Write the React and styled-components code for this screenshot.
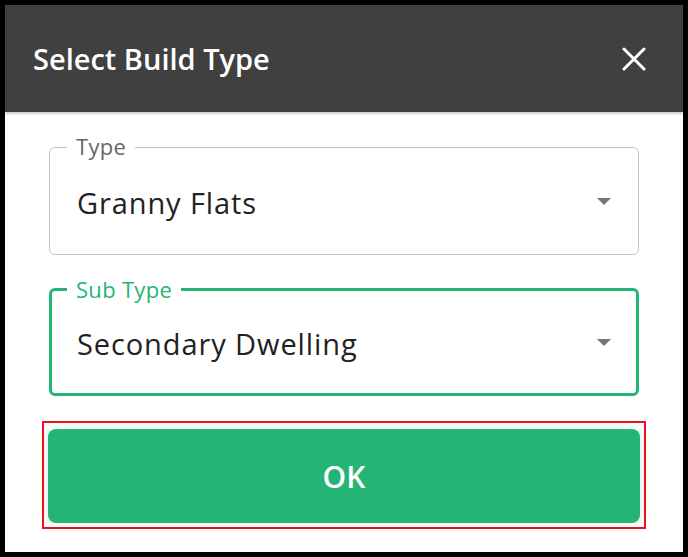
import React from 'react'
import styled, { createGlobalStyle } from 'styled-components'

const GlobalStyle = createGlobalStyle`
  html, body {
    margin: 0;
    background: #000;
  }
  #root {
    padding: 5px;
  }
  * {
    box-sizing: border-box;
  }
`

const Dialog = styled.div`
  width: 678px;
  height: 547px;
  background: #fff;
  display: flex;
  flex-direction: column;
  font-family: 'Open Sans', Lato, sans-serif;
`

const Header = styled.div`
  height: 107px;
  flex: none;
  background: #404040;
  display: flex;
  align-items: center;
  justify-content: space-between;
  padding: 0 37px 0 28px;
  box-shadow: 0 2px 2px rgba(0, 0, 0, 0.18);
  position: relative;
  z-index: 1;
`

const Title = styled.h2`
  margin: 0;
  color: #fff;
  font-size: 29px;
  font-weight: 600;
  letter-spacing: 0;
`

const CloseButton = styled.button`
  border: 0;
  background: none;
  padding: 0;
  display: flex;
  cursor: pointer;
`

const Body = styled.div`
  display: flex;
  flex-direction: column;
  padding: 35px 44px 0 44px;
`

const Field = styled.div`
  position: relative;
  height: 108px;
  border: ${(p) => (p.$active ? '3px solid #24b574' : '1px solid #c4c4c4')};
  border-radius: 6px;
  display: flex;
  align-items: center;
  padding-left: ${(p) => (p.$active ? '25px' : '27px')};
  padding-right: ${(p) => (p.$active ? '25px' : '27px')};
  margin-bottom: ${(p) => p.$gap}px;
`

const Label = styled.span`
  position: absolute;
  top: -16px;
  left: ${(p) => (p.$active ? '15px' : '17px')};
  padding: 0 9px 0 9px;
  background: #fff;
  font-size: 22px;
  line-height: 28px;
  letter-spacing: 0.3px;
  color: ${(p) => (p.$active ? '#24b574' : '#666')};
`

const Value = styled.span`
  flex: 1;
  font-size: 29px;
  letter-spacing: 0.9px;
  color: #222;
  padding-top: 2px;
`

const Caret = styled.svg`
  flex: none;
`

const Outline = styled.div`
  margin: 0 -7px;
  border: 2px solid #e8141e;
  padding: 6px 4px 4px 4px;
`

const OkButton = styled.button`
  width: 100%;
  height: 94px;
  border: 0;
  border-radius: 8px;
  background: #24b574;
  color: #fff;
  font-family: 'Open Sans', Lato, sans-serif;
  font-size: 30px;
  font-weight: 600;
  box-shadow: 0 0 14px rgba(0, 0, 0, 0.1);
  cursor: pointer;
`

function SelectField({ label, value, active, gap }) {
  return (
    <Field $active={active} $gap={gap}>
      <Label $active={active}>{label}</Label>
      <Value>{value}</Value>
      <Caret width="14" height="7" viewBox="0 0 14 7">
        <path d="M0 0 L14 0 L7 7 Z" fill="#757575" />
      </Caret>
    </Field>
  )
}

export default function App() {
  return (
    <>
      <GlobalStyle />
      <Dialog>
        <Header>
          <Title>Select Build Type</Title>
          <CloseButton aria-label="close">
            <svg width="24" height="24" viewBox="0 0 24 24">
              <path d="M2 2 L22 22 M22 2 L2 22" stroke="#fff" strokeWidth="3" strokeLinecap="round" />
            </svg>
          </CloseButton>
        </Header>
        <Body>
          <SelectField label="Type" value="Granny Flats" gap={33} />
          <SelectField label="Sub Type" value="Secondary Dwelling" active gap={25} />
          <Outline>
            <OkButton>OK</OkButton>
          </Outline>
        </Body>
      </Dialog>
    </>
  )
}
